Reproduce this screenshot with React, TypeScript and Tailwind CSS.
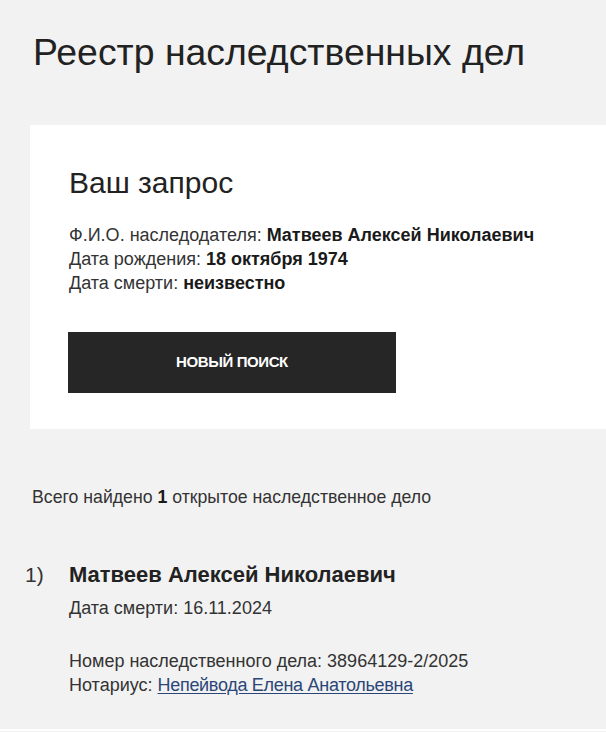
export default function App() {
  return (
    <div
      className="min-h-[732px] bg-[#f2f2f2] text-[#222222] overflow-hidden"
      style={{ fontFamily: '"Liberation Sans", Arial, sans-serif' }}
    >
      <div className="h-[729px]">
        <h1 className="pl-[33px] pt-[30px] text-[37.4px] leading-[44px] font-normal">
          Реестр наследственных дел
        </h1>

        <section className="ml-[30px] mt-[51px] h-[304px] bg-white pl-[39px] pt-[40px]">
          <h2 className="text-[30px] leading-[35px] font-normal">Ваш запрос</h2>
          <div className="mt-[23px] text-[18px] leading-[24px] text-[#333333]">
            <p>
              Ф.И.О. наследодателя: <b className="text-[#1a1a1a]">Матвеев Алексей Николаевич</b>
            </p>
            <p>
              Дата рождения: <b className="text-[#1a1a1a]">18 октября 1974</b>
            </p>
            <p>
              Дата смерти: <b className="text-[#1a1a1a]">неизвестно</b>
            </p>
          </div>
          <button className="mt-[37px] ml-[-1px] flex h-[61px] w-[328px] items-center justify-center bg-[#262626] text-[15px] font-bold uppercase tracking-[-0.4px] text-white">
            Новый поиск
          </button>
        </section>

        <p className="mt-[57px] pl-[32px] text-[17.7px] leading-[22px] text-[#333333]">
          Всего найдено <b className="text-[#1a1a1a]">1</b> открытое наследственное дело
        </p>

        <div className="mt-[53px] flex">
          <span className="w-[69px] shrink-0 pl-[25px] text-[21px] leading-[28px] text-[#333333]">
            1)
          </span>
          <div>
            <h3 className="text-[22px] leading-[28px] font-bold">
              Матвеев Алексей Николаевич
            </h3>
            <p className="mt-[7px] text-[18px] leading-[24px] text-[#333333]">
              Дата смерти: 16.11.2024
            </p>
            <div className="mt-[29px] text-[18px] leading-[24px] text-[#333333]">
              <p>Номер наследственного дела: 38964129-2/2025</p>
              <p>
                Нотариус:{" "}
                <a href="#" className="text-[#2b4778] underline underline-offset-2 tracking-[-0.3px]">
                  Непейвода Елена Анатольевна
                </a>
              </p>
            </div>
          </div>
        </div>
      </div>
      <div className="h-[2px] bg-white" />
    </div>
  );
}
